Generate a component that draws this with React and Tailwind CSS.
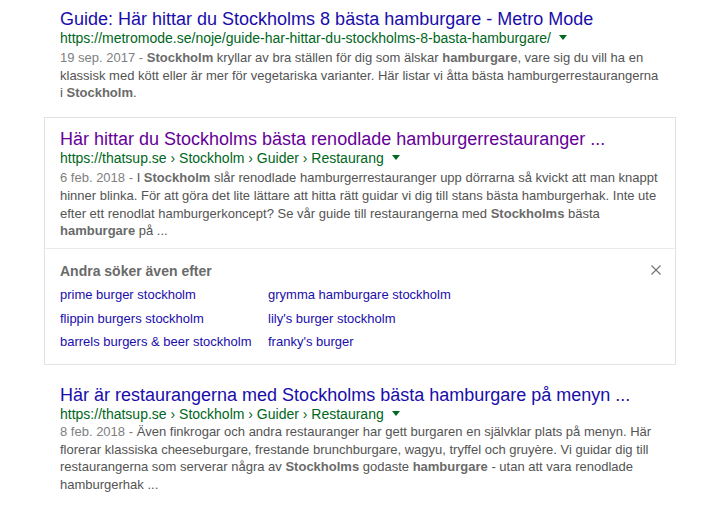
import React from 'react';

const font = { fontFamily: '"Liberation Sans", Arial, sans-serif' };

const Arrow = () => (
  <span className="inline-block ml-[8px] mb-[3px] align-middle w-0 h-0 border-l-[4px] border-r-[4px] border-t-[5px] border-l-transparent border-r-transparent border-t-[#006621]" />
);

const B = ({ children }) => <b className="font-bold text-[#6a6a6a]">{children}</b>;

const Result = ({ title, visited, url, date, lines, tight }) => (
  <div>
    <a
      href="#"
      className={`block text-[18px] leading-[21px] whitespace-nowrap ${visited ? 'text-[#660099]' : 'text-[#1a0dab]'}`}
    >
      {title}
    </a>
    <div className="text-[14px] leading-[16px] text-[#006621] whitespace-nowrap">
      {url}
      <Arrow />
    </div>
    <div className={`${tight ? 'mt-[1px]' : 'mt-[3px]'} text-[13px] leading-[17.7px] text-[#545454]`}>
      {lines.map((line, i) => (
        <div key={i} className="whitespace-nowrap">
          {i === 0 && <span className="text-[#808080]">{date} - </span>}
          {line}
        </div>
      ))}
    </div>
  </div>
);

const related = [
  ['prime burger stockholm', 'grymma hamburgare stockholm'],
  ['flippin burgers stockholm', "lily's burger stockholm"],
  ['barrels burgers & beer stockholm', "franky's burger"],
];

export default function App() {
  return (
    <div className="w-[721px] h-[515px] bg-white overflow-hidden pl-[60px] pt-[9px]" style={font}>
      <Result
        title="Guide: Här hittar du Stockholms 8 bästa hamburgare - Metro Mode"
        url="https://metromode.se/noje/guide-har-hittar-du-stockholms-8-basta-hamburgare/"
        date="19 sep. 2017"
        lines={[
          <><B>Stockholm</B> kryllar av bra ställen för dig som älskar <B>hamburgare</B>, vare sig du vill ha en</>,
          <>klassisk med kött eller är mer för vegetariska varianter. Här listar vi åtta bästa hamburgerrestaurangerna</>,
          <>i <B>Stockholm</B>.</>,
        ]}
      />

      <div className="ml-[-16px] mt-[15px] w-[632px] border border-[#e2e2e2]">
        <div className="pl-[15px] pt-[11px] pb-[8px]">
          <Result
            visited
            title="Här hittar du Stockholms bästa renodlade hamburgerrestauranger ..."
            url="https://thatsup.se › Stockholm › Guider › Restaurang"
            date="6 feb. 2018"
            lines={[
              <>I <B>Stockholm</B> slår renodlade hamburgerrestauranger upp dörrarna så kvickt att man knappt</>,
              <>hinner blinka. För att göra det lite lättare att hitta rätt guidar vi dig till stans bästa hamburgerhak. Inte ute</>,
              <>efter ett renodlat hamburgerkoncept? Se vår guide till restaurangerna med <B>Stockholms</B> bästa</>,
              <><B>hamburgare</B> på ...</>,
            ]}
          />
        </div>
        <div className="border-t border-[#ebebeb] pl-[15px] pr-[14px] pt-[13px] pb-[10px]">
          <div className="flex items-center justify-between">
            <div className="text-[14px] leading-[18px] font-bold text-[#6a6a6a]">Andra söker även efter</div>
            <svg width="10" height="10" viewBox="0 0 10 10" className="mb-[2px]">
              <path d="M0.5 0.5 L9.5 9.5 M9.5 0.5 L0.5 9.5" stroke="#777" strokeWidth="1.2" />
            </svg>
          </div>
          <div className="mt-[3px] grid grid-cols-[208px_auto] text-[13px] leading-[23.7px]">
            {related.map((row) =>
              row.map((t) => (
                <a key={t} href="#" className="text-[#1a0dab] whitespace-nowrap">
                  {t}
                </a>
              ))
            )}
          </div>
        </div>
      </div>

      <div className="mt-[20px]">
        <Result
          tight
          title="Här är restaurangerna med Stockholms bästa hamburgare på menyn ..."
          url="https://thatsup.se › Stockholm › Guider › Restaurang"
          date="8 feb. 2018"
          lines={[
            <>Även finkrogar och andra restauranger har gett burgaren en självklar plats på menyn. Här</>,
            <>florerar klassiska cheeseburgare, frestande brunchburgare, wagyu, tryffel och gruyère. Vi guidar dig till</>,
            <>restaurangerna som serverar några av <B>Stockholms</B> godaste <B>hamburgare</B> - utan att vara renodlade</>,
            <>hamburgerhak ...</>,
          ]}
        />
      </div>
    </div>
  );
}
